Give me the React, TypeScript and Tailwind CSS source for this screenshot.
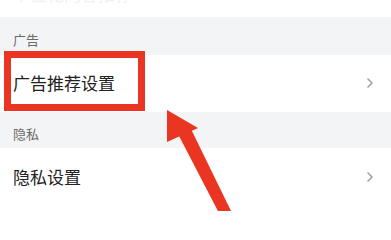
import React from "react";

function Chevron() {
  return (
    <svg width="8" height="12" viewBox="0 0 8 12" className="text-[#a0a0a0]">
      <path d="M2 2l4 4-4 4" fill="none" stroke="currentColor" strokeWidth="1.6" strokeLinecap="round" strokeLinejoin="round" />
    </svg>
  );
}

function Header({ title, h }: { title: string; h: string }) {
  return (
    <div className={`flex items-center bg-[#f3f4f6] pl-[13px] text-[13px] text-[#6b6b6b] ${h}`}>
      <span className="pt-[7px]">{title}</span>
    </div>
  );
}

function Row({ title, h, pad }: { title: string; h: string; pad: string }) {
  return (
    <div className={`flex items-center justify-between bg-white pl-[13px] pr-[17px] ${h} ${pad}`}>
      <span className="text-[17px] text-[#222]">{title}</span>
      <Chevron />
    </div>
  );
}

export default function App() {
  return (
    <div
      className="relative h-[211px] w-[391px] overflow-hidden bg-white"
      style={{ fontFamily: '"Noto Sans CJK SC", "Noto Sans", sans-serif' }}
    >
      {/* clipped row above */}
      <div className="h-[17px] overflow-hidden bg-white pl-[13px]">
        <div className="-mt-[18px] text-[17px] leading-[24px] text-[#f1f1f1]">个性化内容推荐</div>
      </div>
      <Header title="广告" h="h-[38px]" />
      <Row title="广告推荐设置" h="h-[57px]" pad="pb-[1px]" />
      <Header title="隐私" h="h-[36px]" />
      <Row title="隐私设置" h="h-[63px]" pad="pb-[6px]" />

      {/* highlight box */}
      <div className="pointer-events-none absolute left-[4px] top-[51px] h-[60px] w-[141px] border-[7px] border-[#ea3522]" />

      {/* arrow */}
      <svg className="pointer-events-none absolute left-0 top-0" width="391" height="211" viewBox="0 0 391 211">
        <polygon points="167,110 198,128 167,142" fill="#ea3522" />
        <polygon points="178,134 190,127 233,215 220,215" fill="#ea3522" />
      </svg>
    </div>
  );
}
